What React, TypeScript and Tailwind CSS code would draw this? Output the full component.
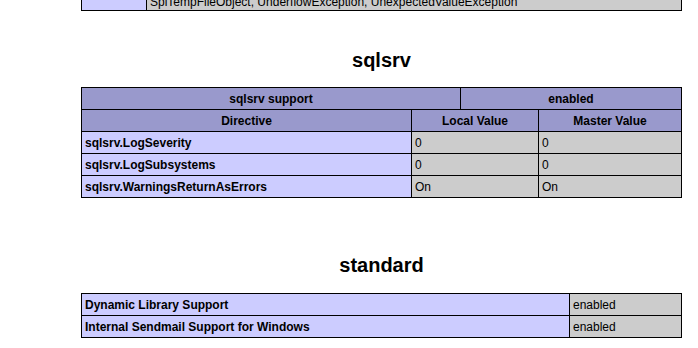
import React from "react";

const E = "bg-[#ccccff] font-bold";
const V = "bg-[#cccccc]";
const H = "bg-[#9999cc] font-bold justify-center";

function Cell({ w, kind, children }: { w: string; kind: string; children?: React.ReactNode }) {
  return (
    <div className={`${w} ${kind} h-[22px] border-r border-b border-black flex items-center px-[3px] whitespace-nowrap overflow-hidden`}>
      {children}
    </div>
  );
}

export default function App() {
  return (
    <div className="w-[698px] h-[348px] overflow-hidden bg-white text-black font-['Liberation_Sans',Arial,sans-serif] text-[12px] leading-[14px]">
      <div className="ml-[81px] w-[601px]">
        {/* tail of previous (SPL) table */}
        <div className="flex border-l border-black">
          <div className="w-[65px] h-[11px] bg-[#ccccff] border-r border-b border-black" />
          <div className="w-[535px] h-[11px] bg-[#cccccc] border-r border-b border-black flex items-end px-[3px] pb-[1px] overflow-hidden whitespace-nowrap">
            SplTempFileObject, UnderflowException, UnexpectedValueException
          </div>
        </div>

        <h2 className="mt-[38px] h-[23px] text-center text-[20px] leading-[23px] font-bold">sqlsrv</h2>

        <div className="mt-[15px] border-l border-t border-black">
          <div className="flex">
            <Cell w="w-[379px]" kind={H}>sqlsrv support</Cell>
            <Cell w="w-[221px]" kind={H}>enabled</Cell>
          </div>
          <div className="flex">
            <Cell w="w-[330px]" kind={H}>Directive</Cell>
            <Cell w="w-[127px]" kind={H}>Local Value</Cell>
            <Cell w="w-[143px]" kind={H}>Master Value</Cell>
          </div>
          {[
            ["sqlsrv.LogSeverity", "0", "0"],
            ["sqlsrv.LogSubsystems", "0", "0"],
            ["sqlsrv.WarningsReturnAsErrors", "On", "On"],
          ].map(([a, b, c]) => (
            <div className="flex" key={a}>
              <Cell w="w-[330px]" kind={E}>{a}</Cell>
              <Cell w="w-[127px]" kind={V}>{b}</Cell>
              <Cell w="w-[143px]" kind={V}>{c}</Cell>
            </div>
          ))}
        </div>

        <h2 className="mt-[56px] h-[23px] text-center text-[20px] leading-[23px] font-bold">standard</h2>

        <div className="mt-[16px] border-l border-t border-black">
          {[
            ["Dynamic Library Support", "enabled"],
            ["Internal Sendmail Support for Windows", "enabled"],
          ].map(([a, b]) => (
            <div className="flex" key={a}>
              <Cell w="w-[488px]" kind={E}>{a}</Cell>
              <Cell w="w-[112px]" kind={V}>{b}</Cell>
            </div>
          ))}
        </div>
      </div>
    </div>
  );
}
